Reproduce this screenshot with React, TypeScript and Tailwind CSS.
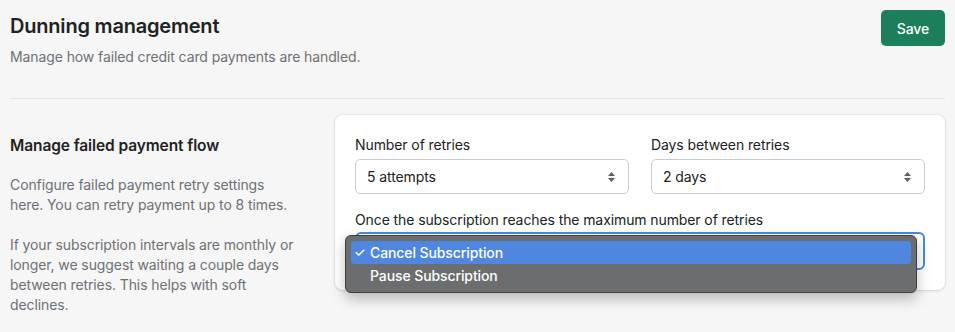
import { useState } from 'react';

const font = { fontFamily: 'Inter, "Liberation Sans", sans-serif' };

const Chevrons = () => (
  <svg width="9" height="14" viewBox="0 0 9 14" className="text-[#5c5f62]">
    <path d="M4.5 2 L8 6 H1 Z" fill="currentColor" />
    <path d="M4.5 12 L8 8 H1 Z" fill="currentColor" />
  </svg>
);

const Select = ({ value }: { value: string }) => (
  <div className="flex h-[35px] items-center justify-between rounded-[5px] border border-[#c9cccf] bg-white pl-[11px] pr-[12px] text-[14px] text-[#202223]">
    <span>{value}</span>
    <Chevrons />
  </div>
);

const App = () => {
  const [choice] = useState('Cancel Subscription');
  const options = ['Cancel Subscription', 'Pause Subscription'];

  return (
    <div style={font} className="h-[332px] w-[955px] overflow-hidden bg-[#f6f6f7] px-[10px] tracking-[-0.1px] text-[#202223]">
      <div className="flex items-start justify-between pt-[10px]">
        <div>
          <h1 className="mt-[2px] text-[20px] font-semibold leading-[28px] tracking-[-0.2px]">Dunning management</h1>
          <p className="mt-[7px] text-[14px] leading-[20px] text-[#6d7175]">
            Manage how failed credit card payments are handled.
          </p>
        </div>
        <button className="h-[36px] w-[64px] rounded-[5px] bg-[#1b7f5b] text-[14px] font-medium text-white">Save</button>
      </div>

      <div className="mt-[31px] h-px bg-[#e1e3e5]" />

      <div className="mt-[16px] flex gap-[25px]">
        <div className="w-[300px] shrink-0 pt-[21px]">
          <h2 className="text-[15.5px] font-semibold leading-[20px]">Manage failed payment flow</h2>
          <p className="mt-[19px] pr-[10px] text-[14px] leading-[20px] text-[#6d7175]">
            Configure failed payment retry settings here. You can retry payment up to 8 times.
          </p>
          <p className="mt-[20px] pr-[10px] text-[14px] leading-[20px] text-[#6d7175]">
            If your subscription intervals are monthly or longer, we suggest waiting a couple days between retries. This helps with soft declines.
          </p>
        </div>

        <div className="relative h-[175px] flex-1 rounded-[8px] bg-white px-[20px] pt-[20px] shadow-[0_0_0_1px_rgba(63,63,68,0.05),0_1px_3px_rgba(63,63,68,0.15)]">
          <div className="grid grid-cols-2 gap-[22px]">
            <div>
              <div className="mb-[4px] text-[14px] leading-[20px]">Number of retries</div>
              <Select value="5 attempts" />
            </div>
            <div>
              <div className="mb-[4px] text-[14px] leading-[20px]">Days between retries</div>
              <Select value="2 days" />
            </div>
          </div>

          <div className="mt-[16px] text-[14px] leading-[20px]">
            Once the subscription reaches the maximum number of retries
          </div>
          <div className="mt-[2px] h-[38px] rounded-[6px] border-2 border-[#4a86e8] bg-white" />

          <div className="absolute left-[10px] top-[120px] w-[572px] rounded-[6px] border border-[#3e3f40] bg-[#6b6d6e] px-[5px] py-[5px] shadow-[0_6px_14px_rgba(0,0,0,0.25)]">
            {options.map((o) => (
              <div
                key={o}
                className={`flex h-[23px] items-center rounded-[4px] text-[14px] font-medium text-white ${
                  o === choice ? 'bg-[#4e86e0]' : ''
                }`}
              >
                <span className="w-[19px] pl-[3px] text-[13px]">{o === choice ? '✓' : ''}</span>
                <span>{o}</span>
              </div>
            ))}
          </div>
        </div>
      </div>
    </div>
  );
};

export default App;
